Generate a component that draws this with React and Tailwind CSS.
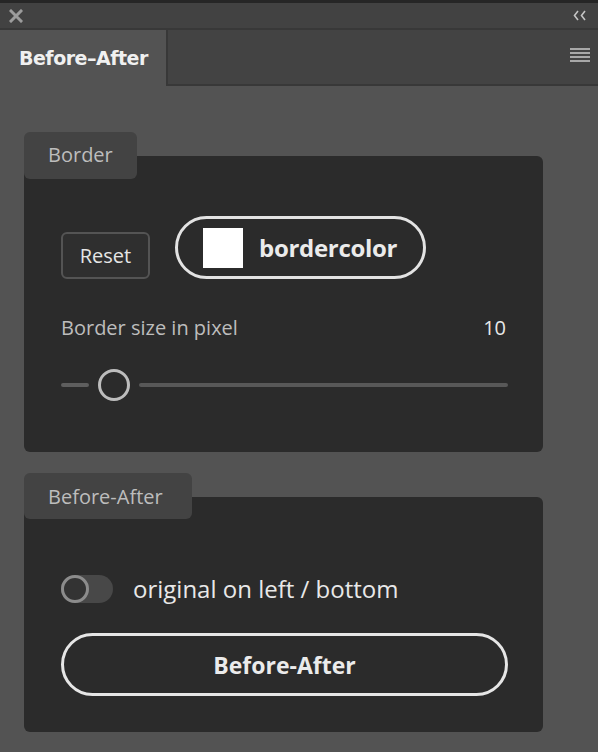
import React, { useState } from "react";

function CloseIcon() {
    return (
        <svg width="14" height="14" viewBox="0 0 14 14">
            <path d="M2 2 L12 12 M12 2 L2 12" stroke="#9c9c9c" strokeWidth="3" strokeLinecap="square" />
        </svg>
    );
}

function CollapseIcon() {
    return (
        <svg width="14" height="11" viewBox="0 0 14 11">
            <path d="M5 1 L1.5 5.5 L5 10 M12 1 L8.5 5.5 L12 10" stroke="#c4c4c4" strokeWidth="1.6" fill="none" />
        </svg>
    );
}

function MenuIcon() {
    return (
        <div className="flex flex-col gap-[2px] w-[20px]">
            <div className="h-[2px] bg-[#a8a8a8]" />
            <div className="h-[2px] bg-[#a8a8a8]" />
            <div className="h-[2px] bg-[#a8a8a8]" />
            <div className="h-[2px] bg-[#a8a8a8]" />
        </div>
    );
}

export default function App() {
    const [borderSize] = useState(10);
    const [originalLeft, setOriginalLeft] = useState(false);

    return (
        <div className="w-[598px] h-[752px] bg-[#535353] flex flex-col overflow-hidden font-['Open_Sans',sans-serif]">
            {/* panel header */}
            <div className="h-[3px] bg-[#262626]" />
            <div className="h-[25px] bg-[#424242] flex items-center justify-between pl-[9px] pr-[11px]">
                <CloseIcon />
                <CollapseIcon />
            </div>
            <div className="h-[2px] bg-[#383838]" />
            <div className="h-[56px] flex">
                <div className="w-[166px] bg-[#535353] flex items-center pl-[19px]">
                    <span className="font-['DejaVu_Sans',sans-serif] font-bold text-[19px] text-[#f0f0f0] tracking-[-0.5px]">
                        Before–After
                    </span>
                </div>
                <div className="flex-1 bg-[#434343] border-l-2 border-b-2 border-[#383838] flex items-center justify-end pr-[8px] pb-[4px]">
                    <MenuIcon />
                </div>
            </div>

            {/* content */}
            <div className="flex flex-col pl-[24px] pt-[46px]">
                {/* Border section */}
                <div className="relative z-10 w-[113px] h-[47px] bg-[#434343] rounded-[6px] pl-[24px] pt-[11px]">
                    <span className="text-[20px] leading-[24px] text-[#bdbdbd]">Border</span>
                </div>
                <div className="w-[519px] h-[296px] -mt-[23px] bg-[#2b2b2b] rounded-[6px] px-[37px] pt-[60px]">
                    <div className="flex items-end gap-[25px]">
                        <button className="w-[89px] h-[47px] border-2 border-[#545454] rounded-[6px] bg-[#2f2f2f] text-[20px] leading-[24px] text-[#e6e6e6]">
                            Reset
                        </button>
                        <button className="h-[63px] border-[3px] border-[#e3e3e3] rounded-full flex items-center pl-[25px] pr-[26px] gap-[16px]">
                            <div className="w-[40px] h-[40px] bg-white" />
                            <span className="font-bold text-[24px] leading-[30px] text-[#ebebeb] tracking-[-0.3px]">bordercolor</span>
                        </button>
                    </div>
                    <div className="flex justify-between items-center mt-[37px] text-[20px] leading-[24px]">
                        <span className="text-[#bdbdbd]">Border size in pixel</span>
                        <span className="text-[#e8e8e8]">{borderSize}</span>
                    </div>
                    <div className="flex items-center mt-[29px] w-[447px]">
                        <div className="w-[28px] h-[4px] rounded-full bg-[#5e5e5e]" />
                        <div className="w-[32px] h-[32px] rounded-full border-[3px] border-[#bdbdbd] mx-[9px]" />
                        <div className="flex-1 h-[4px] rounded-full bg-[#585858]" />
                    </div>
                </div>

                {/* Before-After section */}
                <div className="relative z-10 w-[168px] h-[46px] bg-[#434343] rounded-[6px] pl-[24px] pt-[12px] mt-[21px]">
                    <span className="text-[20px] leading-[24px] text-[#bdbdbd]">Before-After</span>
                </div>
                <div className="w-[519px] h-[235px] -mt-[22px] bg-[#2b2b2b] rounded-[6px] px-[37px] pt-[78px]">
                    <div className="flex items-center gap-[20px]">
                        <button
                            onClick={() => setOriginalLeft(!originalLeft)}
                            className="w-[52px] h-[28px] rounded-full bg-[#484848] flex items-center"
                        >
                            <div className="w-[28px] h-[28px] rounded-full border-[3px] border-[#8c8c8c] bg-[#333333]" />
                        </button>
                        <span className="text-[24px] leading-[28px] text-[#e8e8e8]">original on left / bottom</span>
                    </div>
                    <button className="mt-[30px] w-[447px] h-[63px] border-[3px] border-[#e6e6e6] rounded-full font-bold text-[23px] leading-[28px] text-[#ebebeb]">
                        Before-After
                    </button>
                </div>
            </div>
        </div>
    );
}
